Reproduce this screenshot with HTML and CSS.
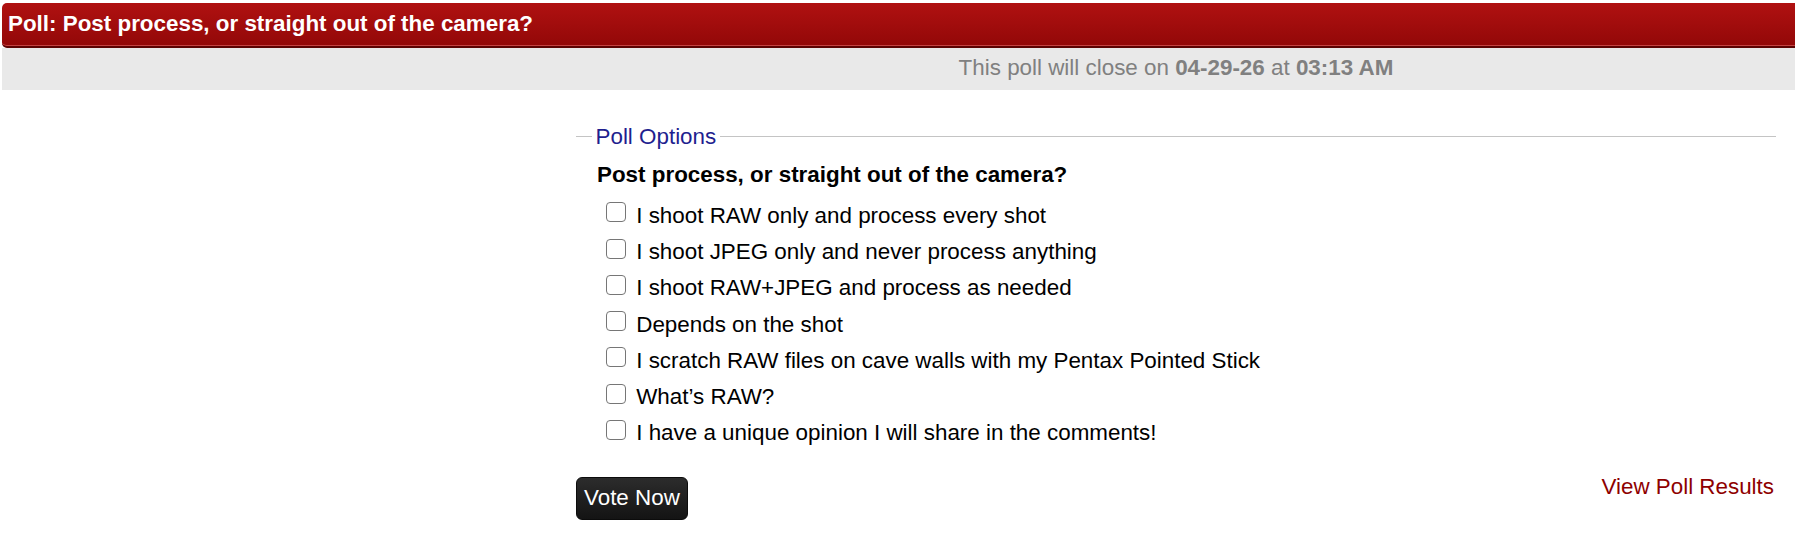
FILE: index.html
```html
<!DOCTYPE html>
<html lang="en">
<head>
<meta charset="utf-8">
<title>Poll</title>
<link rel="stylesheet" href="styles.css">
</head>
<body>
<div class="page">
  <div class="poll-header">Poll: Post process, or straight out of the camera?</div>
  <div class="poll-band">
    <div class="band-inner">This poll will close on <b>04-29-26</b> at <b>03:13 AM</b></div>
  </div>
  <div class="poll-column">
    <form class="poll-form">
      <fieldset class="poll-fieldset">
        <legend class="poll-legend">Poll Options</legend>
        <div class="poll-body">
          <div class="poll-question">Post process, or straight out of the camera?</div>
          <label class="poll-option"><input type="checkbox" class="poll-check"> I shoot RAW only and process every shot</label>
          <label class="poll-option"><input type="checkbox" class="poll-check"> I shoot JPEG only and never process anything</label>
          <label class="poll-option"><input type="checkbox" class="poll-check"> I shoot RAW+JPEG and process as needed</label>
          <label class="poll-option"><input type="checkbox" class="poll-check"> Depends on the shot</label>
          <label class="poll-option"><input type="checkbox" class="poll-check"> I scratch RAW files on cave walls with my Pentax Pointed Stick</label>
          <label class="poll-option"><input type="checkbox" class="poll-check"> What’s RAW?</label>
          <label class="poll-option"><input type="checkbox" class="poll-check"> I have a unique opinion I will share in the comments!</label>
        </div>
      </fieldset>
      <div class="poll-actions">
        <button type="button" class="vote-btn">Vote Now</button>
        <a href="#" class="results-link">View Poll Results</a>
      </div>
    </form>
  </div>
</div>
</body>
</html>
```

FILE: styles.css
```css
html, body {
  margin: 0;
  padding: 0;
  background: #ffffff;
}

body {
  font-family: "Liberation Sans", Arial, sans-serif;
  font-size: 22.4px;
  color: #000;
}

.page {
  padding-left: 2px;
  padding-top: 3px;
}

.poll-header {
  box-sizing: border-box;
  height: 45px;
  padding: 7.5px 0 0 6px;
  line-height: 25px;
  font-weight: bold;
  color: #ffffff;
  background: linear-gradient(#b01111, #920808);
  border-bottom: 2px solid #5c0303;
  box-shadow: inset 0 -1px 0 rgba(255, 140, 140, 0.45);
  border-radius: 5px 0 0 5px;
  white-space: nowrap;
}

.poll-band {
  box-sizing: border-box;
  height: 42px;
  padding-top: 7px;
  line-height: 25px;
  background: #e9e9e9;
  color: #808080;
}

.band-inner {
  margin-left: 574px;
  width: 1200px;
  text-align: center;
}

.poll-column {
  margin-left: 574px;
  width: 1200px;
}

.poll-form {
  margin: 0;
}

.poll-fieldset {
  margin: 34px 0 0 0;
  padding: 12px 0 0 0;
  border: none;
  border-top: 1px solid #c4c4c4;
  min-width: 0;
}

.poll-legend {
  margin-left: 15.5px;
  padding: 0 4px;
  color: #1f1f8f;
  line-height: 25.76px;
}

.poll-body {
  padding-left: 21px;
}

.poll-question {
  font-weight: bold;
  line-height: 25.76px;
  margin-bottom: 10.4px;
}

.poll-option {
  display: block;
  line-height: 36.25px;
  height: 36.25px;
  white-space: nowrap;
}

.poll-check {
  -webkit-appearance: none;
  appearance: none;
  box-sizing: border-box;
  width: 20px;
  height: 20px;
  margin: 0 4px 0.5px 9px;
  border: 1.5px solid #767676;
  border-radius: 4px;
  background: #ffffff;
  vertical-align: baseline;
}

.poll-actions {
  display: flex;
  justify-content: space-between;
  align-items: flex-start;
  margin-top: 22.5px;
}

.vote-btn {
  margin: 2.6px 0 0 0;
  font-family: inherit;
  font-size: 22.4px;
  line-height: 25px;
  padding: 7.5px 7px 8.5px;
  color: #ffffff;
  background: linear-gradient(#2c2c2c, #141414);
  border: 1px solid #0c0c0c;
  border-radius: 6px;
}

.results-link {
  line-height: 25.76px;
  color: #8e0000;
  text-decoration: none;
  margin-right: 2px;
}
```
